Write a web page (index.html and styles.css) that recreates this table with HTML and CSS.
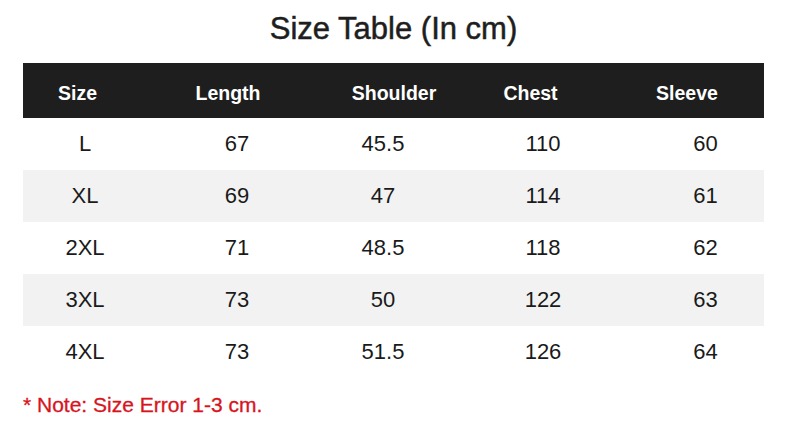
FILE: index.html
```html
<!DOCTYPE html>
<html>
<head>
<meta charset="utf-8">
<link rel="stylesheet" href="styles.css">
</head>
<body>
<div class="page">
  <h1 class="title">Size Table (In cm)</h1>
  <div class="table">
    <div class="row head">
      <div>Size</div><div>Length</div><div>Shoulder</div><div>Chest</div><div>Sleeve</div>
    </div>
    <div class="row">
      <div>L</div><div>67</div><div>45.5</div><div>110</div><div>60</div>
    </div>
    <div class="row alt">
      <div>XL</div><div>69</div><div>47</div><div>114</div><div>61</div>
    </div>
    <div class="row">
      <div>2XL</div><div>71</div><div>48.5</div><div>118</div><div>62</div>
    </div>
    <div class="row alt">
      <div>3XL</div><div>73</div><div>50</div><div>122</div><div>63</div>
    </div>
    <div class="row">
      <div>4XL</div><div>73</div><div>51.5</div><div>126</div><div>64</div>
    </div>
  </div>
  <p class="note">* Note: Size Error 1-3 cm.</p>
</div>
</body>
</html>
```
FILE: styles.css
```css
html, body {
  margin: 0;
  padding: 0;
  background: #ffffff;
}
.page {
  width: 741px;
  margin-left: 23px;
  padding-top: 13px;
  font-family: "Liberation Sans", Arial, sans-serif;
}
.title {
  margin: 0;
  font-size: 31px;
  line-height: 1;
  font-weight: 400;
  color: #1e1e1e;
  -webkit-text-stroke: 0.5px #1e1e1e;
  text-align: center;
}
.table {
  margin-top: 19px;
  display: flex;
  flex-direction: column;
}
.row {
  display: grid;
  grid-template-columns: 124px 180px 112px 208px 117px;
  align-items: center;
  height: 52px;
  font-size: 22px;
  line-height: 1;
  color: #1a1a1a;
  text-align: center;
}
.row.alt {
  background: #f2f2f2;
}
.row.head {
  grid-template-columns: 109px 192px 140px 133px 180px;
  height: 55px;
  box-sizing: border-box;
  padding-top: 7px;
  background: #1e1e1e;
  color: #ffffff;
  font-size: 19.5px;
  font-weight: 700;
}
.note {
  margin: 15.5px 0 0 0;
  font-size: 21px;
  line-height: 1;
  color: #d7141e;
  -webkit-text-stroke: 0.3px #d7141e;
}
```
